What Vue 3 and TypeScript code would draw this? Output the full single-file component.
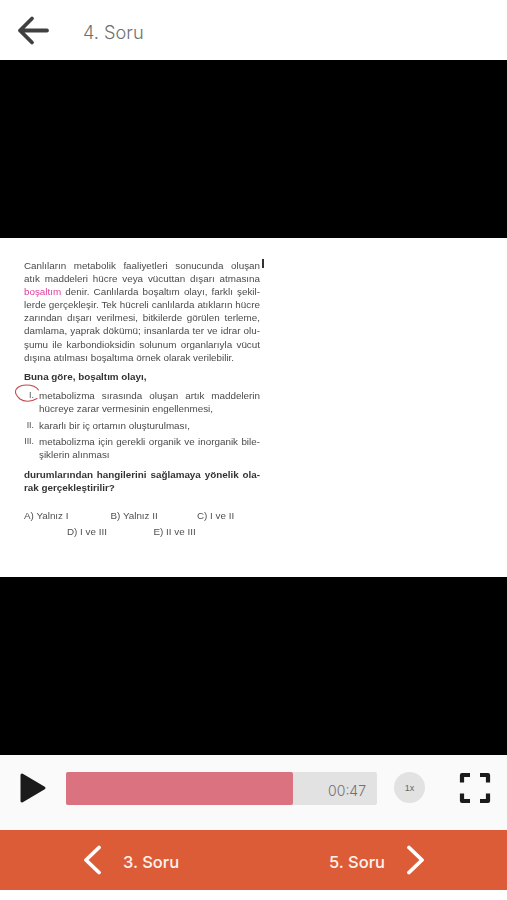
<script setup lang="ts">
const para: string[] = [
  'Canlıların metabolik faaliyetleri sonucunda oluşan',
  'atık maddeleri hücre veya vücuttan dışarı atmasına',
  'denir. Canlılarda boşaltım olayı, farklı şekil-',
  'lerde gerçekleşir. Tek hücreli canlılarda atıkların hücre',
  'zarından dışarı verilmesi, bitkilerde görülen terleme,',
  'damlama, yaprak dökümü; insanlarda ter ve idrar olu-',
  'şumu ile karbondioksidin solunum organlarıyla vücut',
]
</script>

<template>
  <div class="page">
    <header class="top">
      <svg class="back" width="34" height="32" viewBox="0 0 34 32">
        <path d="M31 15.5H4M16 3.5L4 15.5L16 27.5" fill="none" stroke="#404040" stroke-width="3.8" stroke-linecap="round" stroke-linejoin="round" />
      </svg>
      <span class="title">4. Soru</span>
    </header>

    <main class="video">
      <section class="doc">
        <span class="mark"></span>
        <div class="line just">{{ para[0] }}</div>
        <div class="line just">{{ para[1] }}</div>
        <div class="line just"><span class="pink">boşaltım</span> {{ para[2] }}</div>
        <div class="line just">{{ para[3] }}</div>
        <div class="line just">{{ para[4] }}</div>
        <div class="line just">{{ para[5] }}</div>
        <div class="line just">{{ para[6] }}</div>
        <div class="line">dışına atılması boşaltıma örnek olarak verilebilir.</div>
        <div class="line bold lead">Buna göre, boşaltım olayı,</div>

        <div class="item first">
          <span class="num">I.</span>
          <div class="body">
            <div class="line just">metabolizma sırasında oluşan artık maddelerin</div>
            <div class="line">hücreye zarar vermesinin engellenmesi,</div>
          </div>
          <svg class="circle" width="26" height="20" viewBox="0 0 26 20">
            <path d="M24.5 6C22 2 17 1 12 1C6 1 1.5 4 1.5 8C1.5 11 4 13 6 15C10 18 17 18 23 14.5" fill="none" stroke="#c2484f" stroke-width="1.1" stroke-linecap="round" />
          </svg>
        </div>
        <div class="item gap">
          <span class="num">II.</span>
          <div class="body"><div class="line">kararlı bir iç ortamın oluşturulması,</div></div>
        </div>
        <div class="item gap">
          <span class="num">III.</span>
          <div class="body">
            <div class="line just">metabolizma için gerekli organik ve inorganik bile-</div>
            <div class="line">şiklerin alınması</div>
          </div>
        </div>

        <div class="line just bold ask">durumlarından hangilerini sağlamaya yönelik ola-</div>
        <div class="line bold">rak gerçekleştirilir?</div>

        <div class="opts one">
          <span>A) Yalnız I</span><span>B) Yalnız II</span><span>C) I ve II</span>
        </div>
        <div class="opts two">
          <span>D) I ve III</span><span>E) II ve III</span>
        </div>
      </section>
    </main>

    <section class="controls">
      <svg width="28" height="32" viewBox="0 0 28 32" class="play">
        <path d="M3 3L25 16L3 29Z" fill="#1b1b1b" stroke="#1b1b1b" stroke-width="3" stroke-linejoin="round" />
      </svg>
      <div class="bar">
        <div class="fill" :style="{ width: '73%' }"></div>
        <span class="time">00:47</span>
      </div>
      <div class="speed">1x</div>
      <svg class="full" width="32" height="32" viewBox="0 0 32 32">
        <path d="M3 10.5V3H11M21 3H29V10.5M29 21.5V29H21M11 29H3V21.5" fill="none" stroke="#1b1b1b" stroke-width="4.2" stroke-linejoin="round" />
      </svg>
    </section>

    <nav class="pager">
      <div class="pg">
        <svg width="20" height="30" viewBox="0 0 20 30"><path d="M17 2.5L4 15L17 27.5" fill="none" stroke="#fff" stroke-width="3.8" stroke-linecap="round" stroke-linejoin="round" /></svg>
        <span>3. Soru</span>
      </div>
      <div class="pg">
        <span>5. Soru</span>
        <svg width="20" height="30" viewBox="0 0 20 30"><path d="M3 2.5L16 15L3 27.5" fill="none" stroke="#fff" stroke-width="3.8" stroke-linecap="round" stroke-linejoin="round" /></svg>
      </div>
    </nav>
    <div class="foot"></div>
  </div>
</template>

<style scoped>
.page {
  width: 507px;
  height: 900px;
  display: flex;
  flex-direction: column;
  background: #fff;
  overflow: hidden;
  font-family: "Liberation Sans", Arial, sans-serif;
}
.top {
  height: 60px;
  flex: none;
  box-sizing: border-box;
  display: flex;
  align-items: center;
  padding: 2px 0 0 16px;
  background: #fff;
}
.title {
  margin-left: 33px;
  margin-top: 1px;
  font-family: Inter, Lato, sans-serif;
  font-size: 18.2px;
  font-weight: 300;
  color: #707070;
}
.video {
  height: 695px;
  flex: none;
  background: #000;
  display: flex;
  align-items: flex-start;
  padding-top: 178px;
  box-sizing: border-box;
}
.doc {
  position: relative;
  width: 100%;
  height: 339px;
  box-sizing: border-box;
  background: #fff;
  padding: 21px 247px 0 24px;
  color: #4a4a4a;
  font-size: 9.85px;
  filter: blur(0.35px);
}
.line {
  height: 13.1px;
  line-height: 13.1px;
  white-space: nowrap;
}
.just {
  white-space: normal;
  text-align: justify;
  text-align-last: justify;
}
.pink { color: #e0409c; }
.bold { font-weight: 700; color: #333; }
.lead { margin-top: 6.5px; }
.mark {
  position: absolute;
  left: 262px;
  top: 21px;
  width: 2px;
  height: 9px;
  background: #333;
}
.item {
  position: relative;
  display: flex;
}
.item.first { margin-top: 6px; }
.item.gap { margin-top: 3px; }
.num {
  width: 10px;
  margin-right: 5px;
  flex: none;
  text-align: right;
  line-height: 13.1px;
  font-size: 8.8px;
}
.body { flex: 1; min-width: 0; }
.circle {
  position: absolute;
  left: -10px;
  top: -5px;
}
.ask { margin-top: 7px; }
.opts {
  display: flex;
  line-height: 13px;
  height: 13px;
  color: #4f4f4f;
}
.opts span { width: 86.5px; flex: none; white-space: nowrap; }
.one { margin-top: 15px; }
.two { margin-top: 3px; margin-left: 43px; }
.controls {
  height: 75px;
  flex: none;
  box-sizing: border-box;
  display: flex;
  align-items: center;
  padding: 0 16px 8px 19px;
  background: #fafafa;
}
.play { margin-bottom: 1px; }
.bar {
  position: relative;
  width: 311px;
  height: 33px;
  margin-left: 19px;
  background: #e2e2e2;
  border-radius: 2px;
}
.fill {
  height: 100%;
  background: #da7280;
  border-radius: 2px;
}
.time {
  position: absolute;
  right: 11px;
  top: 10px;
  font-family: Inter, Lato, sans-serif;
  font-size: 14px;
  font-weight: 300;
  color: #707070;
}
.speed {
  width: 31px;
  height: 31px;
  margin-left: 17px;
  margin-bottom: 2px;
  border-radius: 50%;
  background: #e2e2e2;
  display: flex;
  align-items: center;
  justify-content: center;
  font-size: 9px;
  color: #666;
}
.full { margin-left: auto; margin-bottom: 2px; }
.pager {
  height: 60px;
  flex: none;
  background: #dd5c38;
  display: flex;
  align-items: center;
  justify-content: space-between;
  padding: 0 81px 0 82px;
}
.pg {
  display: flex;
  align-items: center;
  gap: 21px;
  color: #fff3ec;
  font-family: Inter, Lato, sans-serif;
  font-size: 16.5px;
  font-weight: 500;
}
.pg span { margin-top: 3px; }
.foot { flex: 1; background: #fff; }
</style>
